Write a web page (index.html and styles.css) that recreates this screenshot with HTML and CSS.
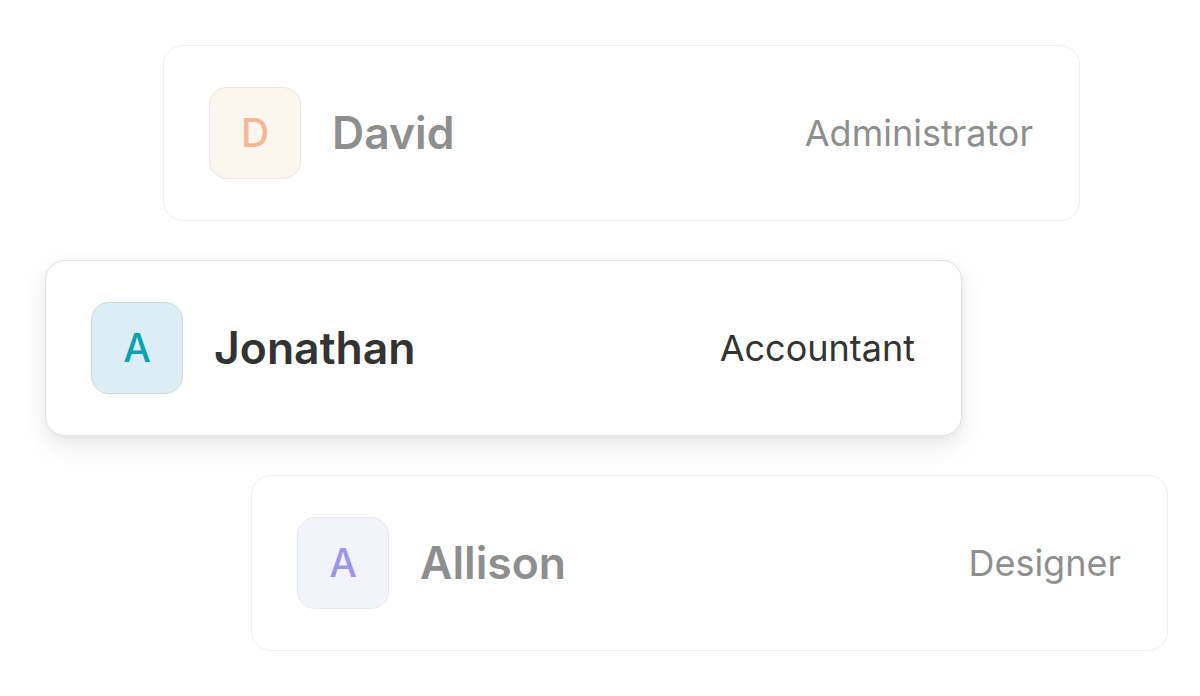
FILE: index.html
```html
<!DOCTYPE html>
<html>
<head>
<meta charset="utf-8">
<link rel="stylesheet" href="styles.css">
</head>
<body>
<div class="stack">
  <div class="card card-david faded">
    <div class="avatar avatar-orange">D</div>
    <div class="name">David</div>
    <div class="role">Administrator</div>
  </div>
  <div class="card card-jonathan active">
    <div class="avatar avatar-teal">A</div>
    <div class="name">Jonathan</div>
    <div class="role">Accountant</div>
  </div>
  <div class="card card-allison faded">
    <div class="avatar avatar-purple">A</div>
    <div class="name">Allison</div>
    <div class="role">Designer</div>
  </div>
</div>
</body>
</html>
```
FILE: styles.css
```css
html, body {
  margin: 0;
  padding: 0;
  background: #ffffff;
  font-family: "Inter", "Liberation Sans", sans-serif;
}
.stack {
  display: flex;
  flex-direction: column;
  gap: 39px;
  padding-top: 44.5px;
}
.card {
  box-sizing: border-box;
  width: 917px;
  height: 176px;
  display: flex;
  align-items: center;
  padding: 0 46px 0 45px;
  border: 1.5px solid #e2e2e2;
  border-radius: 20px;
  background: #fff;
}
.card-david { margin-left: 163px; }
.card-jonathan { margin-left: 45px; box-shadow: 0 10px 24px rgba(0,0,0,0.09), 0 2px 6px rgba(0,0,0,0.04); }
.card-allison { margin-left: 251px; }
.faded { opacity: 0.55; }
.avatar {
  box-sizing: border-box;
  width: 92px;
  height: 92px;
  flex: none;
  border-radius: 18px;
  border: 1.5px solid #cdd6da;
  display: flex;
  align-items: center;
  justify-content: center;
  font-size: 39px;
  font-weight: 500;
}
.avatar-orange { background: #fbefe2; color: #f07a3c; border-color: #d8d0cb; }
.avatar-teal { background: #dcedf3; color: #05a3ad; border-color: #cfd7db; }
.avatar-purple { background: #eaeafb; color: #4b3fe0; border-color: #d5d5e5; }
.name {
  margin-left: 31px;
  font-size: 44.5px;
  font-weight: 600;
  color: #333333;
  flex: 1;
}
.role {
  font-size: 36px;
  font-weight: 400;
  color: #333333;
}
```
